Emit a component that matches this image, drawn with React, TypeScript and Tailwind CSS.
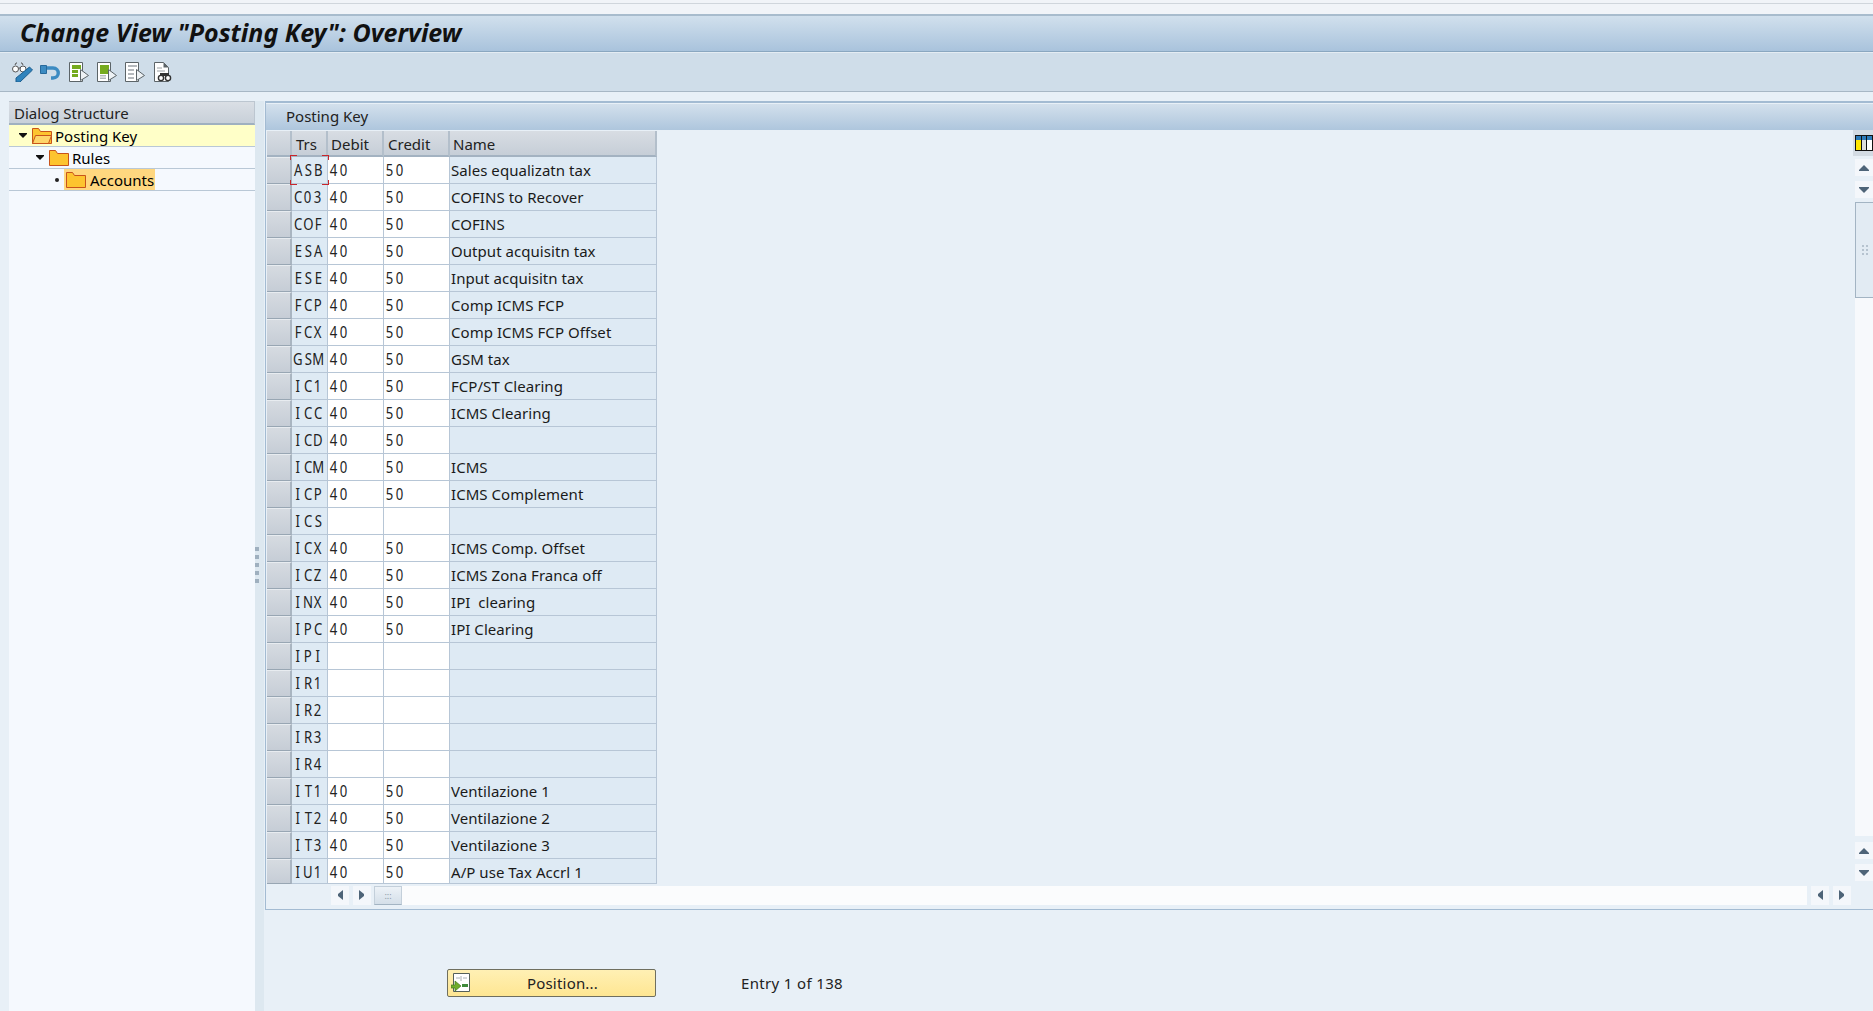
const rows: [string, string, string, string][] = [
  ["ASB", "40", "50", "Sales equalizatn tax"],
  ["C03", "40", "50", "COFINS to Recover"],
  ["COF", "40", "50", "COFINS"],
  ["ESA", "40", "50", "Output acquisitn tax"],
  ["ESE", "40", "50", "Input acquisitn tax"],
  ["FCP", "40", "50", "Comp ICMS FCP"],
  ["FCX", "40", "50", "Comp ICMS FCP Offset"],
  ["GSM", "40", "50", "GSM tax"],
  ["IC1", "40", "50", "FCP/ST Clearing"],
  ["ICC", "40", "50", "ICMS Clearing"],
  ["ICD", "40", "50", ""],
  ["ICM", "40", "50", "ICMS"],
  ["ICP", "40", "50", "ICMS Complement"],
  ["ICS", "", "", ""],
  ["ICX", "40", "50", "ICMS Comp. Offset"],
  ["ICZ", "40", "50", "ICMS Zona Franca off"],
  ["INX", "40", "50", "IPI  clearing"],
  ["IPC", "40", "50", "IPI Clearing"],
  ["IPI", "", "", ""],
  ["IR1", "", "", ""],
  ["IR2", "", "", ""],
  ["IR3", "", "", ""],
  ["IR4", "", "", ""],
  ["IT1", "40", "50", "Ventilazione 1"],
  ["IT2", "40", "50", "Ventilazione 2"],
  ["IT3", "40", "50", "Ventilazione 3"],
  ["IU1", "40", "50", "A/P use Tax Accrl 1"],
];

const UI = "font-['Noto_Sans','Open_Sans',sans-serif]";

function Mono({ text }: { text: string }) {
  return (
    <span className="flex font-['Noto_Sans',sans-serif] text-[16px] text-[#222] leading-[27px]">
      {text.split("").map((c, i) => (
        <span key={i} className="w-[10px] flex justify-center">
          <span className="inline-block scale-x-[0.82]">{c}</span>
        </span>
      ))}
    </span>
  );
}

function Folder({ open }: { open?: boolean }) {
  return (
    <svg width="20" height="16" viewBox="0 0 20 16" className="shrink-0">
      <path d="M.5 15.5V.5h6l2 3h11v12z" fill="#fdc42f" stroke="#c8531b" />
      {open && <path d="M.5 15.5l3-8h16l-3 8z" fill="#fed56a" stroke="#c8531b" />}
    </svg>
  );
}

function Arrow({ dir }: { dir: "up" | "down" | "left" | "right" }) {
  const d = {
    up: "M5 0l5 5v1H0V5z",
    down: "M0 0h10v1L5 6 0 1z",
    left: "M6 0v10L1 6V4z",
    right: "M0 0v10l5-4V4z",
  }[dir];
  const vertical = dir === "up" || dir === "down";
  return (
    <svg width={vertical ? 10 : 6} height={vertical ? 6 : 10} viewBox={vertical ? "0 0 10 6" : "0 0 6 10"}>
      <path d={d} fill="#4e6478" />
    </svg>
  );
}

function TreeArrow() {
  return (
    <svg width="8" height="5" viewBox="0 0 8 5">
      <path d="M0 0h8v1L4 5 0 1z" fill="#111" />
    </svg>
  );
}

function DocIcon({ variant, className }: { variant: 0 | 1 | 2; className?: string }) {
  const green = "#76ab1f";
  const gray = "#b5b9bd";
  return (
    <svg width="20" height="20" viewBox="0 0 20 20" className={className}>
      <path d="M.5.5h13v19H.5z" fill="#fff" stroke="#5c6468" />
      {variant === 0 && (
        <>
          <rect x="3" y="3" width="9" height="4" fill={green} />
          <rect x="3" y="8" width="6" height="3" fill={green} />
          <rect x="3" y="12" width="6" height="3" fill={green} />
        </>
      )}
      {variant === 1 && (
        <>
          <rect x="3" y="3" width="9" height="9" fill={green} />
          <rect x="3" y="13" width="6" height="1.5" fill={gray} />
          <rect x="3" y="15.5" width="6" height="1.5" fill={gray} />
        </>
      )}
      {variant === 2 && (
        <>
          <rect x="3" y="3" width="9" height="2" fill={gray} />
          <rect x="3" y="7" width="6" height="2" fill={gray} />
          <rect x="3" y="11" width="6" height="2" fill={gray} />
          <rect x="3" y="15" width="6" height="2" fill={gray} />
        </>
      )}
      <path d="M11.5 7.5l8 6-8 5z" fill="#eef2f5" stroke="#5c6468" />
    </svg>
  );
}

function Toolbar() {
  return (
    <div className="h-[40px] bg-[#cfdde9] border-b border-[#a7b7c5] border-t border-t-[#e4ecf3] flex items-center pl-[12px]">
      <svg width="21" height="20" viewBox="0 0 21 20">
        <circle cx="3.5" cy="7" r="3" fill="#fff" stroke="#555" />
        <circle cx="11" cy="7" r="3" fill="#fff" stroke="#555" />
        <path d="M3 3l1-2h1M11 3l-1-2H9M6.5 6h2" stroke="#555" fill="none" />
        <path d="M17.5 5l3 3L8 20l-4 0 0-4z" fill="#2f83bd" stroke="#1d5f90" />
      </svg>
      <svg width="20" height="17" viewBox="0 0 20 17" className="ml-[7px]">
        <path d="M5 4h8c7 0 7 10 0 10h-2" fill="none" stroke="#3c8bc2" strokeWidth="3.4" />
        <path d="M.5 1.5h6v8h-6z" fill="#3c8bc2" stroke="#27699b" />
      </svg>
      <DocIcon variant={0} className="ml-[9px]" />
      <DocIcon variant={1} className="ml-[8px]" />
      <DocIcon variant={2} className="ml-[8px]" />
      <svg width="18" height="20" viewBox="0 0 18 20" className="ml-[9px]">
        <path d="M.5.5h9l5 5v14H.5z" fill="#fff" stroke="#5c6468" />
        <path d="M9.5.5v5h5z" fill="#5c6468" />
        <path d="M3 6h5M3 9h8" stroke="#9a9fa3" />
        <circle cx="7" cy="16" r="2.6" fill="#fff" stroke="#333" strokeWidth="1.4" />
        <circle cx="14" cy="16" r="2.6" fill="#fff" stroke="#333" strokeWidth="1.4" />
        <path d="M6 11h9v3H6z" fill="#333" />
      </svg>
    </div>
  );
}

function LeftPanel() {
  return (
    <div className="w-[246px] ml-[9px] mt-[9px] flex flex-col bg-[#f5f9fe] shrink-0">
      <div className="h-[24px] bg-gradient-to-b from-[#dadfe5] to-[#c8d0d9] border-t border-[#bcc6d0] border-r border-b-2 border-b-[#9fb0c0] flex items-center pl-[5px] text-[15px] text-[#222]">
        <span className="pt-[2px]">Dialog Structure</span>
      </div>
      <div className="h-[22px] bg-[#ffffc8] border-b border-[#b9c8d6] flex items-center pl-[10px] text-[15px]">
        <span className="w-[8px] flex justify-center"><TreeArrow /></span>
        <span className="ml-[5px]"><Folder open /></span>
        <span className="ml-[3px] pt-[2px]">Posting Key</span>
      </div>
      <div className="h-[22px] border-b border-[#b9c8d6] flex items-center pl-[27px] text-[15px]">
        <span className="w-[8px] flex justify-center"><TreeArrow /></span>
        <span className="ml-[5px]"><Folder /></span>
        <span className="ml-[3px] pt-[2px]">Rules</span>
      </div>
      <div className="h-[22px] border-b border-[#b9c8d6] flex items-center pl-[46px] text-[15px]">
        <span className="w-[4px] h-[4px] bg-[#222] rounded-full mr-[5px]" />
        <span className="bg-[#ffd77f] h-[21px] w-[91px] flex items-center pl-[2px]">
          <Folder />
          <span className="ml-[4px] pt-[2px]">Accounts</span>
        </span>
      </div>
    </div>
  );
}

function Sash() {
  return (
    <div className="w-[9px] bg-[#dde8f0] mt-[9px] flex flex-col gap-[4px] pt-[446px] shrink-0">
      {[0, 1, 2, 3, 4].map((i) => (
        <div key={i} className="w-[4px] h-[4px] bg-[#9fb0bf]" />
      ))}
    </div>
  );
}

function Row({ row, index }: { row: [string, string, string, string]; index: number }) {
  const last = index === rows.length - 1;
  return (
    <div className={`flex ${last ? "h-[25px]" : "h-[27px]"} text-[15px] leading-[27px]`}>
      <div className="w-[25px] shrink-0 bg-gradient-to-b from-[#d6dbe1] to-[#c6cdd6] border-t border-t-[#e8ecf0] border-b border-b-[#98a6b3] border-r-2 border-r-[#a9b5c1]" />
      <div className="relative w-[36px] shrink-0 bg-[#deeaf4] border-b border-r border-[#b7c6d6] pl-[1px]">
        <Mono text={row[0]} />
        {index === 0 && (
          <>
            <span className="absolute z-10 left-[-2px] top-[-2px] w-[7px] h-[5px] border-l border-t border-[#c8252c]" />
            <span className="absolute z-10 right-[-2px] top-[-2px] w-[7px] h-[5px] border-r border-t border-[#c8252c]" />
            <span className="absolute z-10 left-[-2px] bottom-[-2px] w-[7px] h-[5px] border-l border-b border-[#c8252c]" />
            <span className="absolute z-10 right-[-2px] bottom-[-2px] w-[7px] h-[5px] border-r border-b border-[#c8252c]" />
          </>
        )}
      </div>
      <div className="w-[56px] shrink-0 bg-white border-b border-r border-[#b7c6d6] pl-[1px]"><Mono text={row[1]} /></div>
      <div className="w-[66px] shrink-0 bg-white border-b border-r border-[#b7c6d6] pl-[1px]"><Mono text={row[2]} /></div>
      <div className="w-[207px] shrink-0 bg-[#deeaf4] border-b border-r border-[#b7c6d6] pl-[1px] text-[#1a1a1a] whitespace-pre tracking-[0.05px]">{row[3]}</div>
    </div>
  );
}

function Table() {
  return (
    <div className="flex flex-col">
      <div className="flex h-[27px] text-[15px] leading-[26px] text-[#222] pt-[1px]">
        {[
          ["w-[25px]", ""],
          ["w-[36px] pl-[4px]", "Trs"],
          ["w-[56px] pl-[3px]", "Debit"],
          ["w-[66px] pl-[4px]", "Credit"],
          ["w-[207px] pl-[3px]", "Name"],
        ].map(([w, t], i) => (
          <div key={i} className={`${w} shrink-0 bg-gradient-to-b from-[#d8dde3] to-[#c6ced7] border-b-2 border-b-[#a3b2c1] border-r-2 border-r-[#b3bfcb]`}>
            {t}
          </div>
        ))}
      </div>
      {rows.map((r, i) => (
        <Row key={r[0]} row={r} index={i} />
      ))}
    </div>
  );
}

function ScrollBtn({ dir, className }: { dir: "up" | "down" | "left" | "right"; className: string }) {
  return (
    <div className={`${className} bg-[#f4f7fb] flex items-center justify-center shrink-0`}>
      <Arrow dir={dir} />
    </div>
  );
}

function RightPanel() {
  return (
    <div className="flex-1 min-w-0 flex flex-col mt-[9px] ml-[1px]">
      <div className="h-[809px] border-t-2 border-b border-l border-[#a3bbd2] bg-[#e8f0f7] flex flex-col pt-[1px]">
        <div className="h-[26px] bg-gradient-to-b from-[#d3e0ec] to-[#aec6dd] flex items-center pl-[20px] text-[15px] text-[#222] shrink-0">
          <span className="mt-[-1px]">Posting Key</span>
        </div>
        <div className="flex h-[756px] pl-[1px] justify-between">
          <Table />
          <div className="w-[20px] flex flex-col shrink-0 pt-0">
            <div className="h-[26px] bg-[#d3dbe3] pl-[2px] flex items-center shrink-0">
              <svg width="18" height="18" viewBox="0 0 18 18">
                <rect x="0.5" y="1.5" width="17" height="15" fill="#fff" stroke="#111" />
                <rect x="1" y="2" width="16" height="4" fill="#2c7ab8" />
                <rect x="1" y="6" width="5" height="10" fill="#ffe600" />
                <rect x="7" y="6" width="4" height="10" fill="#ddd" />
                <path d="M6.5 2v14M11.5 2v14" stroke="#111" />
              </svg>
            </div>
            <div className="pl-[2px] pt-[3px] flex flex-col flex-1">
              <ScrollBtn dir="up" className="h-[17px]" />
              <div className="h-[5px]" />
              <ScrollBtn dir="down" className="h-[17px]" />
              <div className="h-[4px]" />
              <div className="h-[96px] bg-[#e2ebf3] border border-r-0 border-[#a3b4c3] flex items-center justify-center shrink-0">
                <div className="grid grid-cols-2 gap-[2px] w-[6px]">
                  {[0, 1, 2, 3, 4, 5].map((i) => (
                    <div key={i} className="w-[2px] h-[2px] bg-[#b6c3cf]" />
                  ))}
                </div>
              </div>
              <div className="h-[538px] bg-[#f7f9fc]" />
              <div className="h-[6px]" />
              <ScrollBtn dir="up" className="h-[17px]" />
              <div className="h-[5px]" />
              <ScrollBtn dir="down" className="h-[17px]" />
            </div>
          </div>
        </div>
        <div className="flex h-[20px] pl-[65px] items-center pt-0 mt-[-1px] gap-[4px]">
          <ScrollBtn dir="left" className="w-[18px] h-[19px]" />
          <ScrollBtn dir="right" className="w-[18px] h-[19px]" />
          <div className="w-[28px] h-[19px] bg-gradient-to-b from-[#edf2f7] to-[#d4dfe9] border border-[#c3cfda] border-b-[#a3b4c3] flex items-center justify-center text-[#8a99a7] text-[9px] leading-none shrink-0 ml-[-1px]">
            :::
          </div>
          <div className="flex-1 h-[19px] bg-[#fbfcfd] ml-[-4px]" />
          <ScrollBtn dir="left" className="w-[18px] h-[19px]" />
          <ScrollBtn dir="right" className="w-[18px] h-[19px]" />
          <div className="w-[18px]" />
        </div>
      </div>
      <div className="flex items-center pl-[182px] pt-[59px]">
        <button className="w-[209px] h-[28px] rounded-[2px] border border-[#6f6f5f] bg-gradient-to-b from-[#fff0b4] to-[#fee692] flex items-center text-[15px] text-[#222] pl-[3px]">
          <svg width="20" height="20" viewBox="0 0 20 20" className="shrink-0">
            <path d="M2.5.5h16v18h-16z" fill="#fff" stroke="#55605a" />
            <path d="M5 5h4M12 5h4M10 3v5" stroke="#aab0b4" />
            <path d="M0 12h4V8l6 5-6 5v-3H0z" fill="#70ac2c" stroke="#3f7a1c" strokeWidth="0.7" />
            <rect x="11" y="11" width="6" height="3" fill="#3f8a3a" />
          </svg>
          <span className="flex-1 text-center pr-[5px] pl-[4px] tracking-[0.2px]">Position...</span>
        </button>
        <span className="ml-[85px] text-[15px] text-[#222] tracking-[0.35px]">Entry 1 of 138</span>
      </div>
    </div>
  );
}

export default function App() {
  return (
    <div className={`w-[1873px] h-[1011px] overflow-hidden flex flex-col bg-[#e8f0f7] ${UI}`}>
      <div className="h-[14px] bg-[#f1f4f8] pt-[3px] shrink-0">
        <div className="h-px bg-[#d0d6dc]" />
      </div>
      <div className="h-[38px] shrink-0 bg-gradient-to-b from-[#d1e0ed] to-[#a9c3dc] border-t-2 border-[#a8bccd] border-b border-b-[#8aa7c0] flex items-center pl-[20px]">
        <span className="font-['Noto_Sans',sans-serif] font-bold italic text-[25px] leading-none mt-[-2px] text-[#111]">
          Change View "Posting Key": Overview
        </span>
      </div>
      <Toolbar />
      <div className="flex flex-1 min-h-0">
        <LeftPanel />
        <Sash />
        <RightPanel />
      </div>
    </div>
  );
}
